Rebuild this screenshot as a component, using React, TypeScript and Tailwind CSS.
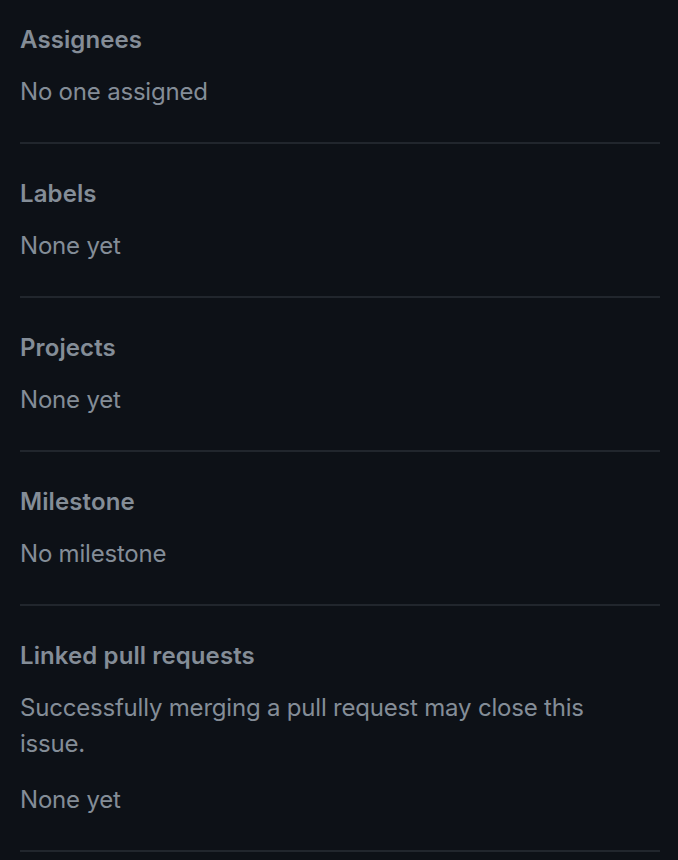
const sections = [
  { title: 'Assignees', body: 'No one assigned' },
  { title: 'Labels', body: 'None yet' },
  { title: 'Projects', body: 'None yet' },
  { title: 'Milestone', body: 'No milestone' },
]

export default function App() {
  return (
    <div className="min-h-[860px] bg-[#0d1117] pl-5 pr-[18px] text-[24px] leading-[36px] tracking-[-0.2px] text-[#848d97] [font-family:Inter,'Noto_Sans',sans-serif]">
      {sections.map((s, i) => (
        <div
          key={s.title}
          className={`${i === 0 ? 'pt-[22px]' : 'pt-8'} pb-8 border-b-2 border-[#21262d]`}
        >
          <h3 className="mb-4 font-semibold tracking-[0.1px]">{s.title}</h3>
          <p>{s.body}</p>
        </div>
      ))}
      <div className="pt-8 pb-8 border-b-2 border-[#21262d]">
        <h3 className="mb-4 font-semibold tracking-[0.1px]">Linked pull requests</h3>
        <p className="mb-5 max-w-[600px]">Successfully merging a pull request may close this issue.</p>
        <p>None yet</p>
      </div>
    </div>
  )
}
